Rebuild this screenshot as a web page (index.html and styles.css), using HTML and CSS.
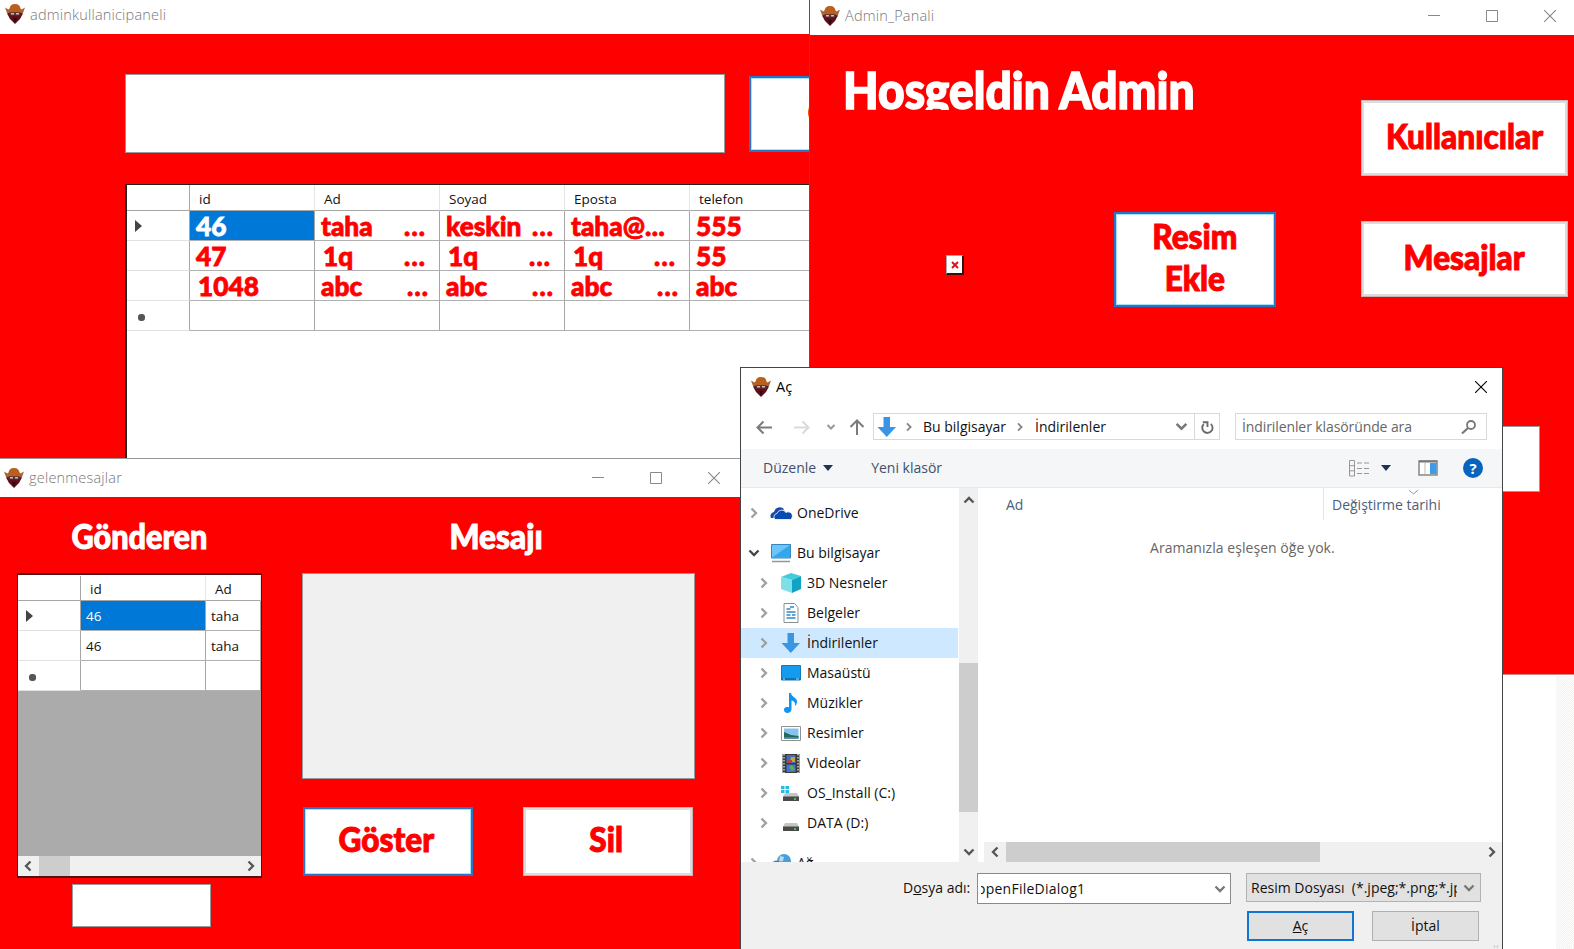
FILE: index.html
```html
<!DOCTYPE html>
<html lang="tr">
<head>
<meta charset="utf-8">
<title>Admin_Panali</title>
<link rel="stylesheet" href="styles.css">
</head>
<body>
<svg width="0" height="0" class="defs">
  <defs>
    <symbol id="logo" viewBox="0 0 20 20">
      <path d="M0 3.500l3.500 2 1-1h11l1 1 3.500-2-2 5.500-3 2-5 1-5-1-3-2z" fill="#a9653a"/>
      <path d="M4.500 5.500Q4.500 0 10 0t5.500 5.500l-1 3h-9z" fill="#b9601c"/>
      <path d="M2 9.500l4-1h8l4 1-3 5.500-5 5-5-5z" fill="#5f0f1a"/>
      <path d="M4.500 8.500h11v3h-11z" fill="#54363a"/>
      <path d="M6 9h3v1.500H6zM11 9h3v1.500h-3z" fill="#d8b9b0"/>
      <path d="M8 14h4l-2 5z" fill="#2d0a10"/>
    </symbol>
    <symbol id="chev-r" viewBox="0 0 10 12"><path d="M2.500 1.500L7 6l-4.500 4.500" fill="none" stroke="currentColor" stroke-width="2.300"/></symbol>
    <symbol id="chev-d" viewBox="0 0 12 10"><path d="M1.500 2.500L6 7l4.500-4.500" fill="none" stroke="currentColor" stroke-width="2.300"/></symbol>
    <symbol id="down" viewBox="0 0 20 20"><path d="M6.500 0h6.500v10h6L9.800 20 .5 10h6z" fill="#3a96e4"/></symbol>
    <symbol id="min" viewBox="0 0 12 12"><path d="M0 5.500h12" stroke="currentColor"/></symbol>
    <symbol id="max" viewBox="0 0 12 12"><path d="M.5.5h11v11H.5z" fill="none" stroke="currentColor"/></symbol>
    <symbol id="close" viewBox="0 0 12 12"><path d="M0 0l12 12M12 0L0 12" stroke="currentColor" stroke-width="1.100"/></symbol>
  </defs>
</svg>

<main class="desktop">
  <div class="speckle"></div>

  <section class="window users">
    <header class="titlebar"><svg class="logo"><use href="#logo"/></svg><span class="title">adminkullanicipaneli</span></header>
    <div class="users-body">
      <div class="search-row">
        <div class="box"></div>
        <div class="btn focus"><span class="hobo">G</span></div>
      </div>
      <div class="table users-table">
        <div class="rh head"></div><div class="head">id</div><div class="head">Ad</div><div class="head">Soyad</div><div class="head">Eposta</div><div class="head">telefon</div>
        <div class="rh"><i class="tri"></i></div><div class="cell sel"><b>46</b></div><div class="cell"><b>taha</b><em>...</em></div><div class="cell"><b>keskin</b><em class="far">...</em></div><div class="cell"><b>taha@<em>...</em></b></div><div class="cell"><b>555</b></div>
        <div class="rh"></div><div class="cell"><b>47</b></div><div class="cell"><b class="in">1q</b><em>...</em></div><div class="cell"><b class="in">1q</b><em>...</em></div><div class="cell"><b class="in">1q</b><em>...</em></div><div class="cell"><b>55</b></div>
        <div class="rh"></div><div class="cell"><b class="in">1048</b></div><div class="cell"><b>abc</b><em class="far">...</em></div><div class="cell"><b>abc</b><em class="far">...</em></div><div class="cell"><b>abc</b><em class="far">...</em></div><div class="cell"><b>abc</b></div>
        <div class="rh"><i class="dot"></i></div><div class="cell"></div><div class="cell"></div><div class="cell"></div><div class="cell"></div><div class="cell"></div>
      </div>
    </div>
  </section>

  <section class="window admin">
    <header class="titlebar"><svg class="logo"><use href="#logo"/></svg><span class="title">Admin_Panali</span>
      <span class="controls"><svg><use href="#min"/></svg><svg><use href="#max"/></svg><svg><use href="#close"/></svg></span></header>
    <div class="admin-body">
      <div class="welcome"><span>Hosgeldin Admin</span></div>
      <div class="broken"><svg viewBox="0 0 8 8"><path d="M1 1l6 6M7 1L1 7" stroke="#d8141c" stroke-width="2"/></svg></div>
      <div class="btn focus upload"><span class="hobo">Resim<br>Ekle</span></div>
      <div class="side">
        <div class="btn"><span class="hobo">Kullanıcılar</span></div>
        <div class="btn"><span class="hobo">Mesajlar</span></div>
        <div class="box field"></div>
      </div>
    </div>
  </section>

  <section class="window inbox">
    <header class="titlebar"><svg class="logo"><use href="#logo"/></svg><span class="title">gelenmesajlar</span>
      <span class="controls"><svg><use href="#min"/></svg><svg><use href="#max"/></svg><svg><use href="#close"/></svg></span></header>
    <div class="inbox-body">
      <div class="from">
        <h2><span class="hobo h-from">Gönderen</span></h2>
        <div class="frame">
          <div class="table inbox-table">
            <div class="rh head"></div><div class="head">id</div><div class="head">Ad</div>
            <div class="rh"><i class="tri"></i></div><div class="cell sel">46</div><div class="cell">taha</div>
            <div class="rh"></div><div class="cell">46</div><div class="cell">taha</div>
            <div class="rh"><i class="dot"></i></div><div class="cell"></div><div class="cell"></div>
          </div>
          <div class="hbar"><svg class="flip"><use href="#chev-r"/></svg><i></i><svg><use href="#chev-r"/></svg></div>
        </div>
        <div class="box id-box"></div>
      </div>
      <div class="message">
        <h2><span class="hobo">Mesajı</span></h2>
        <div class="box text"></div>
        <div class="actions"><div class="btn focus"><span class="hobo">Göster</span></div><div class="btn"><span class="hobo">Sil</span></div></div>
      </div>
    </div>
  </section>

  <section class="window dialog">
    <header class="titlebar"><svg class="logo"><use href="#logo"/></svg><span class="title">Aç</span><svg class="x"><use href="#close"/></svg></header>
    <nav class="nav">
      <svg class="arrows" viewBox="0 0 112 20">
        <path d="M18 10.500H4M9.500 4.500l-6 6 6 6" fill="none" stroke="#7b7b7b" stroke-width="2"/>
        <path d="M40 10.500h14M48.500 4.500l6 6-6 6" fill="none" stroke="#dadada" stroke-width="2"/>
        <path d="M73.500 8l3.500 3.500L80.500 8" fill="none" stroke="#9a9a9a" stroke-width="2"/>
        <path d="M103 18V4M96.500 10L103 3.500l6.500 6.500" fill="none" stroke="#7b7b7b" stroke-width="2"/>
      </svg>
      <div class="address">
        <svg class="ic"><use href="#down"/></svg><svg class="c c1"><use href="#chev-r"/></svg><span>Bu bilgisayar</span><svg class="c c2"><use href="#chev-r"/></svg><span>İndirilenler</span>
        <svg class="drop"><use href="#chev-d"/></svg>
        <div class="refresh"><svg viewBox="0 0 16 16"><path d="M4 4.500A5.500 5.500 0 1 0 11.500 4.200M3 2.500h5v5" fill="none" stroke="#6a6a6a" stroke-width="2" transform="translate(0 1)"/></svg></div>
      </div>
      <div class="search"><span>İndirilenler klasöründe ara</span><svg viewBox="0 0 16 16"><circle cx="10" cy="6" r="4" fill="none" stroke="#777" stroke-width="1.800"/><path d="M7 9l-6 5.500" stroke="#777" stroke-width="2.200"/></svg></div>
    </nav>
    <div class="tools">
      <span class="org">Düzenle</span><i class="caret"></i><span class="new">Yeni klasör</span>
      <svg class="view" viewBox="0 0 21 17"><path d="M.5.5h5v15.500h-5zM.5 5.700h5M.5 10.800h5M8 3h5M15 3h5M8 8.500h5M15 8.500h5M8 13.500h5M15 13.500h5" fill="none" stroke="#9b9598"/></svg><i class="caret"></i>
      <svg class="pane" viewBox="0 0 20 16"><path d="M1 1h18v14H1z" fill="#fff" stroke="#878787" stroke-width="1.500"/><path d="M1 1.500h18" stroke="#777" stroke-width="2"/><path d="M12 3h6.500v11H12z" fill="#3d9be9"/><path d="M7 3v11" stroke="#bbb"/></svg>
      <span class="help">?</span>
    </div>
    <div class="content">
      <ul class="tree">
        <li class="root"><svg class="a"><use href="#chev-r"/></svg><svg class="ic" viewBox="0 0 20 20"><path d="M0 15a4 4 0 0 1 3-6 6 6 0 0 1 10-3L7 15z" fill="#174aa8"/><path d="M4 16.500a3.500 3.500 0 0 1 2-6 5 5 0 0 1 9-1 3.500 3.500 0 0 1 4.500 7z" fill="#094ab2" stroke="#fff" stroke-width=".8"/></svg><span>OneDrive</span></li>
        <li class="root pc"><svg class="a open"><use href="#chev-d"/></svg><svg class="ic" viewBox="0 0 20 20"><path d="M.5 1.500h19V15H.5z" fill="#6cc6fa" stroke="#3487bb"/><path d="M1 14.500L19 2v12.500z" fill="#35a5ee"/><path d="M1 18.500h18" stroke="#8b999f" stroke-width="1.500"/></svg><span>Bu bilgisayar</span></li>
        <li><svg class="a"><use href="#chev-r"/></svg><svg class="ic" viewBox="0 0 20 20"><path d="M0 4l10-4 10 3-9 4z" fill="#42cbdc"/><path d="M0 4l11 3v13L0 16z" fill="#7fdfe6"/><path d="M11 7l9-4v13l-9 4z" fill="#12a3c4"/></svg><span>3D Nesneler</span></li>
        <li><svg class="a"><use href="#chev-r"/></svg><svg class="ic" viewBox="0 0 20 20"><path d="M3 .5h10.500l3.500 4v15H3z" fill="#fff" stroke="#8a8f94"/><path d="M5.500 6h4M5.500 9h9M5.500 12h4M11 12h3.500M5.500 15h9M9 4h4" stroke="#2e87c8" stroke-width="1.500"/></svg><span>Belgeler</span></li>
        <li class="on"><svg class="a"><use href="#chev-r"/></svg><svg class="ic"><use href="#down"/></svg><span>İndirilenler</span></li>
        <li><svg class="a"><use href="#chev-r"/></svg><svg class="ic" viewBox="0 0 20 20"><path d="M.5 2.500h19v14.500H.5z" fill="#149bee" stroke="#1479bd"/><path d="M1 16h18" stroke="#0868ab" stroke-width="1.500"/><path d="M2 16h2M15 16h3" stroke="#b4dcff"/></svg><span>Masaüstü</span></li>
        <li><svg class="a"><use href="#chev-r"/></svg><svg class="ic" viewBox="0 0 20 20"><path d="M8 0h2c0 4 7 5 6 9-.3 2-1 3-2 4 .5-4-1-5-3.500-5.500V16c0 5-7.500 5-7.500 1 0-3 3-3.500 5-2.500z" fill="#0f95f0"/></svg><span>Müzikler</span></li>
        <li><svg class="a"><use href="#chev-r"/></svg><svg class="ic" viewBox="0 0 20 20"><path d="M.5 3.500h19v14H.5z" fill="#fff" stroke="#929292"/><path d="M3 5.500h14.500v10H3z" fill="#84c3ee"/><path d="M3 9l7 3 7.500 1v2.500H3z" fill="#28675c"/><path d="M3 14h14.500v1.500H3z" fill="#4185b5"/></svg><span>Resimler</span></li>
        <li><svg class="a"><use href="#chev-r"/></svg><svg class="ic" viewBox="0 0 20 20"><path d="M1.500 1h17v19h-17z" fill="#3b3b3b"/><path d="M3 1v19M17 1v19" stroke="#ccc" stroke-width="1.500" stroke-dasharray="1.500 1.500"/><path d="M5.500 2h9v8h-9z" fill="#4469b8"/><path d="M5.500 11.500h9V19h-9z" fill="#3a77dd"/><path d="M10 4h4v5h-5z" fill="#c3a539"/><path d="M7 7h4v3H7z" fill="#a7484b"/><path d="M8 14l3-2 3 4-3 2z" fill="#69a64d"/></svg><span>Videolar</span></li>
        <li><svg class="a"><use href="#chev-r"/></svg><svg class="ic" viewBox="0 0 20 20"><path d="M0 3h3.500v3H0zM4.500 3H8v3H4.500zM0 7h3.500v3H0zM4.500 7H8v3H4.500z" fill="#23bce3"/><path d="M4 10h12l2 4H2z" fill="#c5c5c5"/><path d="M2 13.500h16V18H2z" fill="#4a4a4a"/><path d="M13 16h2" stroke="#4ee35c" stroke-width="1.500"/></svg><span>OS_Install (C:)</span></li>
        <li><svg class="a"><use href="#chev-r"/></svg><svg class="ic" viewBox="0 0 20 20"><path d="M4 10h12l2 4H2z" fill="#c5c5c5"/><path d="M2 13.500h16V18H2z" fill="#4a4a4a"/><path d="M13 16h2" stroke="#4ee35c" stroke-width="1.500"/></svg><span>DATA (D:)</span></li>
        <li class="root net"><svg class="a"><use href="#chev-r"/></svg><svg class="ic" viewBox="0 0 20 20"><circle cx="13" cy="8" r="7" fill="#4aa0d4"/><path d="M9 3l4 1-1 4-4 1z" fill="#b6dded"/><path d="M0 9.500l5-2 7 2v5H0z" fill="#2f7fb5"/></svg><span>Ağ</span></li>
      </ul>
      <div class="vbar"><svg class="up"><use href="#chev-d"/></svg><i></i><svg><use href="#chev-d"/></svg></div>
      <div class="files">
        <div class="cols"><span class="c-name">Ad</span><span class="c-date">Değiştirme tarihi<svg class="sort" viewBox="0 0 12 6"><path d="M1 1l5 4 5-4" fill="none" stroke="#8b8b8b"/></svg></span></div>
        <p>Aramanızla eşleşen öğe yok.</p>
        <div class="hbar"><svg class="flip"><use href="#chev-r"/></svg><i></i><svg><use href="#chev-r"/></svg></div>
      </div>
    </div>
    <footer class="foot">
      <label>D<u>o</u>sya adı:</label>
      <div class="name"><div><span>openFileDialog1</span></div><svg><use href="#chev-d"/></svg></div>
      <div class="right">
        <div class="filter"><div><span>Resim Dosyası&nbsp; (*.jpeg;*.png;*.jpg)</span></div><svg><use href="#chev-d"/></svg></div>
        <div class="pair"><div class="ok"><u>A</u>ç</div><div>İptal</div></div>
      </div>
      <i class="grip"></i>
    </footer>
  </section>
</main>
</body>
</html>
```
FILE: styles.css
```css
* { box-sizing: border-box; }
body { margin: 0; font: 14px/20px "Open Sans", "Noto Sans", sans-serif; color: #111; }
svg { display: block; flex: none; overflow: visible; }
.defs { position: absolute; }
.desktop { position: relative; width: 1574px; height: 949px; overflow: hidden; background: #fff; }
.speckle { position: absolute; right: 0; top: 676px; width: 18px; height: 273px; background: repeating-conic-gradient(#f4f2f1 0 25%, #fdfdfd 0 50%) 0 0 / 2px 2px; }

.window { position: absolute; overflow: hidden; background: #f00; display: flex; flex-direction: column; }
.users { left: 0; top: 0; width: 810px; height: 458px; }
.admin { left: 809px; top: 0; width: 765px; height: 675px; border-left: 1px solid #a33; border-bottom: 1px solid #c88; }
.inbox { left: 0; top: 458px; width: 741px; height: 491px; border-top: 1px solid #999; }
.dialog { left: 740px; top: 367px; width: 763px; height: 582px; border: 1px solid #444; border-bottom: 0; background: #fff; }

.titlebar { display: flex; align-items: center; flex: none; background: #fff; height: 34px; padding: 0 5px; color: #999; }
.logo { width: 20px; height: 20px; margin-right: 5px; }
.title { font-weight: 300; font-size: 14.500px; color: #777; white-space: nowrap; letter-spacing: .2px; }
.users .titlebar { padding-bottom: 6px; }
.users .title { padding-top: 2px; }
.admin .titlebar { height: 35px; padding: 0 18px 3px 10px; }
.inbox .titlebar { height: 38px; padding: 0 21px 0 4px; }
.controls { display: flex; gap: 46px; margin-left: auto; }
.controls svg { width: 12px; height: 12px; color: #888; }

.hobo { display: inline-block; font: 900 34px/42px Lato, "Open Sans", sans-serif; color: #f00; -webkit-text-stroke: 1px currentColor; transform: scaleX(.93); white-space: nowrap; text-align: center; padding-bottom: 5px; }
.box { background: #fff; border: 1px solid #999; }
.btn { background: #fff; border: 3px solid #dcdcdc; outline: 1px solid #c9b5b5; outline-offset: -1px; display: flex; align-items: center; justify-content: center; }
.btn.focus { border: 2px solid #2a76c6; outline: 0; box-shadow: inset 0 0 0 1px #a9e0fb; }

.users-body { padding: 40px 0 0 125px; }
.search-row { display: flex; gap: 24px; margin-bottom: 31px; }
.search-row .box { width: 600px; height: 79px; flex: none; }
.search-row .btn { width: 140px; height: 76px; margin-top: 2px; flex: none; }

.table { display: grid; font-size: 13.500px; }
.users-table { grid-template-columns: 63px 125px 125px 125px 125px 125px; grid-template-rows: 26px 30px 30px 30px 30px; width: 700px; height: 290px; background: #fff; border: 1px solid #222; border-width: 1px 2px; }
.table > div { display: flex; align-items: center; border-right: 1px solid #a6a6a6; border-bottom: 1px solid #b0b0b0; white-space: nowrap; overflow: hidden; }
.table .rh { border-bottom-color: #e2e2e2; padding-left: 8px; }
.table .head { padding: 2px 0 0 9px; border-right-color: #e5e5e5; border-bottom-color: #a6a6a6; }
.table .rh.head { border-right-color: #a6a6a6; }
.table .cell { padding-left: 5px; }
.table .sel { background: #0078d7; color: #fff; }
.tri { border: 6px solid transparent; border-left: 7px solid #444; border-right: 0; }
.dot { width: 7px; height: 7px; border-radius: 3px; background: #555; margin: 4px 0 0 3px; }
.users-table b, .users-table em { display: block; font: 900 26px/28px Lato, sans-serif; color: #f00; -webkit-text-stroke: .8px currentColor; flex: none; }
.users-table b { width: 82px; transform: scaleX(1.01); transform-origin: left; margin-left: 1px; }
.users-table em { letter-spacing: 1.200px; margin-left: 1px; }
.users-table b em { display: inline; margin: 0; letter-spacing: .5px; }
.users-table .sel b { color: #fff; }
.users-table .in { margin-left: 3px; width: 80px; }
.users-table .far { margin-left: 4px; }

.admin-body { display: grid; grid-template-columns: 304px 251px 206px; align-items: start; }
.welcome { grid-column: 1 / 3; grid-row: 1; height: 75px; padding: 25px 0 0 33px; overflow: hidden; }
.welcome span { display: inline-block; font: 900 51px/60px Lato, sans-serif; color: #fff; -webkit-text-stroke: 1.500px #fff; transform: scaleX(.905); transform-origin: left; white-space: nowrap; }
.broken { grid-column: 1; grid-row: 1; margin: 220px 0 0 136px; width: 18px; height: 20px; background: #fff; border: 1px solid #aaa; border-right: 2px solid #311; border-bottom: 2px solid #311; display: grid; place-items: center; }
.broken svg { width: 8px; height: 8px; }
.upload { grid-column: 2; grid-row: 1; margin-top: 177px; width: 162px; height: 95px; }
.side { grid-column: 3; grid-row: 1; padding-top: 65px; margin-left: -4px; width: 207px; }
.side .btn { height: 76px; margin-bottom: 45px; }
.side .field { height: 66px; width: 179px; margin-top: 129px; }

.inbox-body { display: grid; grid-template-columns: 302px 393px; }
h2 { margin: 0; height: 76px; padding-top: 18px; text-align: center; line-height: 42px; }
h2 .hobo { color: #fff; }
.h-from { transform: scaleX(.9); }
.message h2 { padding-right: 5px; }
.from h2 { width: 279px; }
.frame { margin-left: 17px; width: 245px; height: 305px; border: 1px solid #511; border-width: 2px 1px; background: #ababab; display: flex; flex-direction: column; }
.inbox-table { grid-template-columns: 63px 125px 55px; grid-template-rows: 25px 30px 30px 30px; padding-top: 1px; background: #fff; }
.inbox-table > div { background: #fff; }
.inbox-table .cell { padding-top: 1px; }
.hbar { display: flex; align-items: center; background: #f0f0f0; height: 20px; margin-top: auto; color: #555; padding: 0 5px; }
.hbar svg { width: 10px; height: 12px; }
.hbar svg:last-child { margin-left: auto; }
.hbar i { background: #cdcdcd; height: 100%; width: 31px; margin-left: 6px; }
.flip, .up { transform: rotate(180deg); }
.id-box { margin: 6px 0 0 72px; width: 139px; height: 43px; }
.message .text { height: 206px; background: #f0f0f0; }
.actions { display: flex; justify-content: space-between; padding: 28px 2px 0 1px; }
.actions .btn { width: 170px; height: 69px; }
.actions .hobo { position: relative; left: -2px; }

.dialog .titlebar { height: 38px; padding: 0 15px 0 10px; }
.dialog .title { color: #000; font-weight: 400; }
.x { width: 12px; height: 12px; color: #000; margin-left: auto; }
.nav { display: flex; height: 43px; padding: 7px 15px 9px 13px; align-items: center; flex: none; }
.arrows { width: 112px; height: 20px; margin-right: 7px; }
.address, .search { display: flex; align-items: center; border: 1px solid #d9d9d9; height: 27px; white-space: nowrap; }
.address { width: 347px; padding-left: 3px; }
.ic { width: 20px; height: 20px; }
.c { width: 8px; height: 10px; color: #888; }
.c1 { margin: 0 10px 0 8px; }
.c2 { margin: 0 11px 0 10px; }
.drop { width: 13px; height: 11px; color: #777; margin-left: auto; }
.refresh { border-left: 1px solid #d9d9d9; width: 25px; height: 25px; margin-left: 6px; display: grid; place-items: center; }
.refresh svg { width: 15px; height: 15px; }
.search { width: 252px; margin-left: auto; padding: 0 9px 0 6px; color: #666; }
.search span { letter-spacing: -.1px; }
.search svg { width: 16px; height: 16px; margin-left: auto; }
.tools { display: flex; align-items: center; height: 39px; background: #f4f6f8; border-bottom: 1px solid #e5e8ea; padding: 0 19px 0 22px; color: #41506e; flex: none; }
.caret { border: 5px solid transparent; border-top: 6px solid #203354; border-bottom: 0; }
.org + .caret { margin-left: 7px; }
.new { margin-left: 38px; }
.view { width: 21px; height: 17px; margin-left: auto; }
.view + .caret { margin-left: 11px; }
.pane { width: 20px; height: 16px; margin: 0 25px 0 27px; }
.help { width: 20px; height: 20px; border-radius: 50%; background: #0764be; color: #fff; text-align: center; font-weight: 700; font-size: 15px; line-height: 20px; }

.content { display: flex; height: 374px; flex: none; }
.tree { width: 219px; margin: 0; padding: 10px 0 0; list-style: none; overflow: hidden; }
.tree li { display: flex; align-items: center; height: 30px; width: 217px; padding-left: 18px; white-space: nowrap; }
.tree .root { padding-left: 8px; }
.tree .pc, .tree .net { margin-top: 10px; }
.tree .on { background: #cde8ff; }
.tree .a { width: 10px; height: 12px; color: #a0a0a0; margin-right: 12px; }
.tree .a.open { width: 12px; height: 10px; color: #444; margin: 0 11px 0 -1px; }
.tree .ic { margin-right: 6px; }
.vbar { width: 19px; background: #f0f0f0; display: flex; flex-direction: column; align-items: center; padding: 7px 0 5px; color: #555; margin-left: -1px; }
.vbar svg { width: 12px; height: 10px; }
.vbar i { width: 19px; height: 149px; background: #cdcdcd; margin-top: 158px; }
.vbar svg:last-child { margin-top: auto; }
.files { flex: 1; margin-left: 6px; display: flex; flex-direction: column; }
.cols { display: flex; height: 32px; line-height: 33px; color: #4c607a; }
.c-name { width: 340px; padding-left: 22px; border-right: 1px solid #e5e5e5; }
.c-date { padding-left: 8px; position: relative; white-space: nowrap; }
.sort { position: absolute; left: 84px; top: 1px; width: 11px; height: 6px; }
.files p { margin: 18px 0 0 166px; color: #666; white-space: nowrap; letter-spacing: .05px; }
.files .hbar { padding: 0 5px 0 6px; }
.files .hbar i { width: 314px; }

.foot { position: relative; flex: 1; background: #f0f0f0; display: flex; padding: 11px 21px 0 162px; align-items: flex-start; white-space: nowrap; }
.foot label { width: 74px; line-height: 30px; }
.name { width: 254px; height: 31px; background: #fff; border: 1px solid #8a8a8a; display: flex; align-items: center; justify-content: space-between; padding: 0 4px 0 3px; }
.name div { overflow: hidden; padding-top: 1px; }
.name span { margin-left: -4px; letter-spacing: .25px; }
.name svg, .filter svg { width: 12px; height: 10px; color: #777; }
.right { margin-left: auto; width: 235px; }
.filter { height: 29px; background: #e1e1e1; border: 1px solid #b3b3b3; display: flex; align-items: center; justify-content: space-between; padding: 0 5px 0 4px; }
.filter div { width: 206px; overflow: hidden; }
.pair { display: flex; justify-content: space-between; padding: 9px 2px 0 1px; }
.pair div { width: 107px; height: 30px; line-height: 28px; text-align: center; background: #e1e1e1; border: 1px solid #b0b0b0; }
.pair .ok { border: 2px solid #0f76d2; line-height: 26px; }
.grip { position: absolute; right: 3px; bottom: 0; width: 6px; height: 4px; background: radial-gradient(#bbb 40%, transparent 50%) 0 0 / 3px 3px; }
```
